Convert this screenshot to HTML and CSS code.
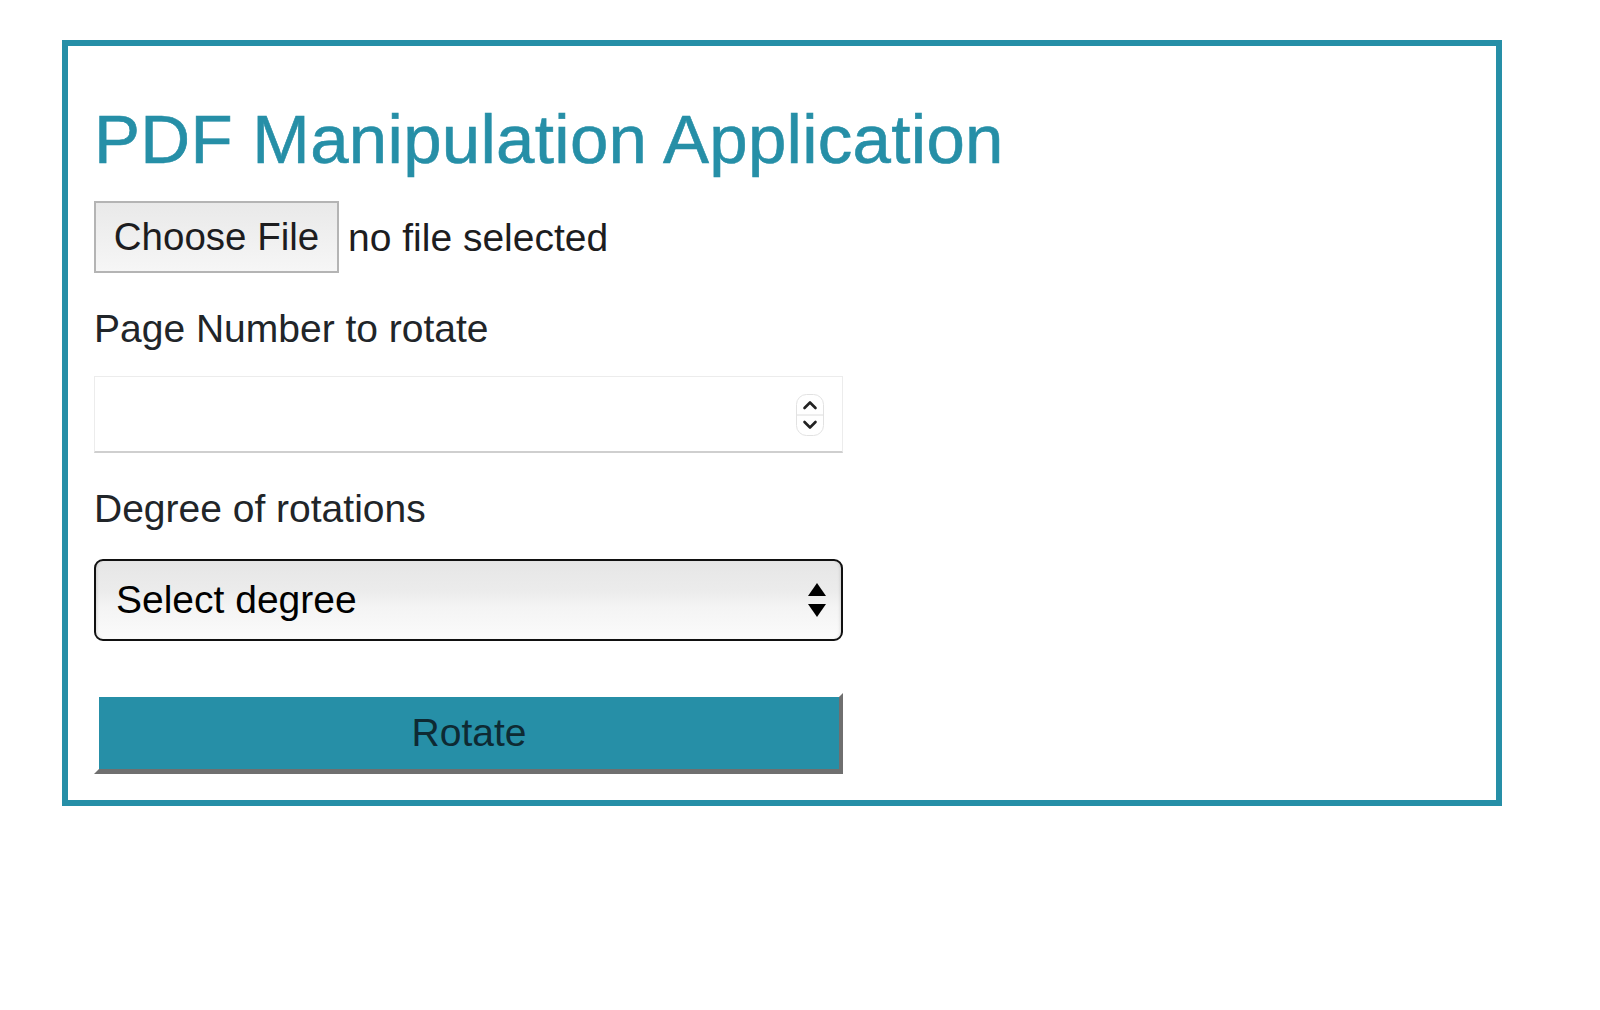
FILE: index.html
```html
<!DOCTYPE html>
<html lang="en">
<head>
<meta charset="utf-8">
<title>PDF Manipulation Application</title>
<link rel="stylesheet" href="styles.css">
</head>
<body>
<main class="panel">
  <h1 class="title">PDF Manipulation Application</h1>
  <div class="file-row">
    <button class="file-btn" type="button">Choose File</button>
    <span class="file-name">no file selected</span>
  </div>
  <label class="label label-page">Page Number to rotate</label>
  <div class="number-input">
    <svg class="spinner" width="28" height="42" viewBox="0 0 28 42">
      <rect x="0.5" y="0.5" width="27" height="41" rx="10" fill="#fff" stroke="#e2e2e2"/>
      <line x1="1" y1="21" x2="27" y2="21" stroke="#dcdcdc" stroke-width="1"/>
      <path d="M8.5 14 L14 8.5 L19.5 14" fill="none" stroke="#222" stroke-width="2.6" stroke-linecap="round" stroke-linejoin="round"/>
      <path d="M8.5 28 L14 33.5 L19.5 28" fill="none" stroke="#222" stroke-width="2.6" stroke-linecap="round" stroke-linejoin="round"/>
    </svg>
  </div>
  <label class="label label-degree">Degree of rotations</label>
  <div class="select">
    <span class="select-text">Select degree</span>
    <svg class="select-arrows" width="20" height="36" viewBox="0 0 20 36">
      <path d="M1 14 L10 1 L19 14 Z" fill="#000"/>
      <path d="M1 22 L10 35 L19 22 Z" fill="#000"/>
    </svg>
  </div>
  <button class="rotate-btn" type="button">Rotate</button>
</main>
</body>
</html>
```

FILE: styles.css
```css
html, body {
  margin: 0;
  padding: 0;
  background: #ffffff;
}

body {
  font-family: "Liberation Sans", Arial, sans-serif;
  color: #212529;
}

.panel {
  box-sizing: border-box;
  width: 1440px;
  margin: 40px 0 0 62px;
  border: 6px solid #268fa7;
  padding: 52px 26px 26px 26px;
  display: flex;
  flex-direction: column;
  align-items: flex-start;
}

.title {
  margin: 0;
  font-size: 69px;
  font-weight: 400;
  line-height: 84px;
  color: #268fa7;
  letter-spacing: 0.3px;
  -webkit-text-stroke: 0.6px #268fa7;
}

.file-row {
  margin-top: 19px;
  display: flex;
  align-items: center;
  gap: 9px;
}

.file-btn {
  box-sizing: border-box;
  height: 72px;
  width: 245px;
  padding: 0;
  border: 2px solid #b4b4b4;
  background: linear-gradient(#e9e9e9, #f6f6f6);
  font-family: "Liberation Sans", Arial, sans-serif;
  font-size: 38.5px;
  color: #1d1d1f;
  border-radius: 0;
}

.file-name {
  font-size: 39px;
  color: #1d1d1f;
  padding-top: 2px;
}

.label {
  display: block;
  font-size: 39px;
  line-height: 47px;
  color: #212529;
}

.label-page {
  margin-top: 32px;
}

.number-input {
  box-sizing: border-box;
  margin-top: 24px;
  width: 749px;
  height: 77px;
  border: 1px solid #ececec;
  border-bottom: 2px solid #cfcfcf;
  background: #fff;
  display: flex;
  justify-content: flex-end;
  align-items: center;
  padding-right: 18px;
}

.spinner {
  display: block;
  margin-top: 1px;
}

.label-degree {
  margin-top: 32px;
}

.select {
  box-sizing: border-box;
  margin-top: 27px;
  width: 749px;
  height: 82px;
  border: 2px solid #111;
  border-radius: 9px;
  background: linear-gradient(#e6e6e6 0%, #ececec 40%, #f4f4f4 60%, #fbfbfb 100%);
  box-shadow: inset 3px 0 3px -2px rgba(0,0,0,0.12), inset -3px 0 3px -2px rgba(0,0,0,0.12);
  display: flex;
  align-items: center;
  justify-content: space-between;
  padding: 0 14px 0 20px;
}

.select-text {
  font-size: 39px;
  color: #000;
}

.select-arrows {
  display: block;
}

.rotate-btn {
  box-sizing: border-box;
  margin-top: 52px;
  width: 749px;
  height: 81px;
  border-style: solid;
  border-width: 4px 4px 5px 5px;
  border-color: #ffffff #6f6f6f #6f6f6f #ffffff;
  background: #268fa7;
  font-family: "Liberation Sans", Arial, sans-serif;
  font-size: 39px;
  color: #0e2a33;
  padding: 0;
  border-radius: 0;
}
```
